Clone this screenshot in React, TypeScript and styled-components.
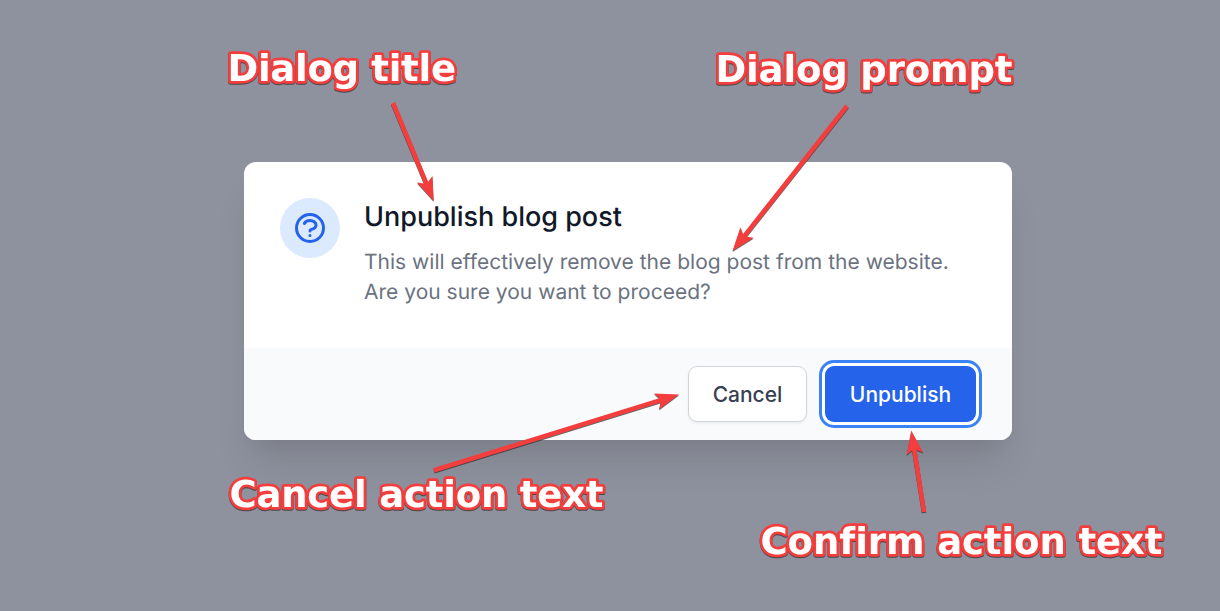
import React from "react";
import styled, { createGlobalStyle } from "styled-components";

const GlobalStyle = createGlobalStyle`
  *, *::before, *::after { box-sizing: border-box; }
  body { margin: 0; background: #8e929e; }
`;

const Backdrop = styled.main`
  position: relative;
  width: 1220px;
  height: 611px;
  padding: 162px 208px 0 244px;
  overflow: hidden;
  background: #8e929e;
  font-family: Inter, "Liberation Sans", sans-serif;
  text-rendering: geometricPrecision;
`;

const Dialog = styled.section`
  width: 768px;
  height: 278px;
  display: flex;
  flex-direction: column;
  overflow: hidden;
  border-radius: 12px;
  background: #fff;
  box-shadow: 0 30px 38px -8px rgba(0, 0, 0, 0.1), 0 15px 15px -8px rgba(0, 0, 0, 0.04);
`;

const Content = styled.div`
  flex: 1;
  display: flex;
  gap: 24px;
  padding: 36px 36px 0;
`;

const IconDisc = styled.div`
  width: 60px;
  height: 60px;
  flex: none;
  display: grid;
  place-items: center;
  border-radius: 50%;
  background: #dbeafe;
  color: #2563eb;
`;

const Copy = styled.div`
  flex: 1;
  white-space: nowrap;
`;

const Title = styled.h3`
  margin: 0 0 13px;
  color: #111827;
  font-size: 27px;
  font-weight: 500;
  line-height: 37px;
`;

const Prompt = styled.p`
  margin: 0;
  color: #6b7280;
  font-size: 21px;
  line-height: 30px;
  letter-spacing: 0.01px;
`;

const Footer = styled.footer`
  height: 92px;
  display: flex;
  justify-content: flex-end;
  align-items: center;
  gap: 18px;
  padding: 0 36px;
  background: #f9fafb;
`;

const Button = styled.button<{ $primary?: boolean }>`
  width: ${(p) => (p.$primary ? 151 : 119)}px;
  height: 56px;
  padding: 2px 0 0;
  border: ${(p) => (p.$primary ? "0" : "1px solid #d1d5db")};
  border-radius: 9px;
  background: ${(p) => (p.$primary ? "#2563eb" : "#fff")};
  color: ${(p) => (p.$primary ? "#fff" : "#374151")};
  font: 500 21px/30px Inter, "Liberation Sans", sans-serif;
  box-shadow: ${(p) =>
    p.$primary ? "0 0 0 3px #fff, 0 0 0 6px #3b82f6" : "0 1.5px 3px rgba(0, 0, 0, 0.05)"};
`;

const Annotations = styled.svg`
  position: absolute;
  inset: 0;
  pointer-events: none;
  filter: drop-shadow(0.5px 1px 0.5px rgba(40, 40, 40, 0.7));
`;

const Label = styled.text`
  fill: #fff;
  stroke: #f43d3d;
  stroke-width: 5.4px;
  stroke-linejoin: round;
  paint-order: stroke;
  font: bold 37px "DejaVu Sans", sans-serif;
  font-variant-ligatures: none;
`;

type ArrowProps = { from: [number, number]; to: [number, number] };

function Arrow({ from, to }: ArrowProps) {
  const dx = to[0] - from[0];
  const dy = to[1] - from[1];
  const length = Math.hypot(dx, dy);
  const angle = (Math.atan2(dy, dx) * 180) / Math.PI;
  return (
    <path
      fill="#f43d3d"
      transform={`translate(${to[0]} ${to[1]}) rotate(${angle})`}
      d={`M0 0L-23.5-8.4L-20-2.3H${-length}V2.3H-20L-23.5 8.4Z`}
    />
  );
}

const labels = [
  { text: "Dialog title", x: 227.5, y: 81, width: 228.5 },
  { text: "Dialog prompt", x: 715.5, y: 82, width: 297 },
  { text: "Cancel action text", x: 229.5, y: 507, width: 374 },
  { text: "Confirm action text", x: 760.5, y: 554, width: 402 },
];

const arrows: ArrowProps[] = [
  { from: [393, 103], to: [433.7, 201] },
  { from: [847, 106], to: [732.5, 251] },
  { from: [434, 470.3], to: [679, 394.5] },
  { from: [924, 512], to: [911.3, 430.5] },
];

export default function App() {
  return (
    <>
      <GlobalStyle />
      <Backdrop>
        <Dialog role="dialog" aria-labelledby="dialog-title">
          <Content>
            <IconDisc>
              <svg width="36" height="36" viewBox="0 0 24 24" fill="none" stroke="currentColor" strokeWidth="2" strokeLinecap="round" strokeLinejoin="round">
                <path d="M8.228 9c.549-1.165 2.03-2 3.772-2 2.21 0 4 1.343 4 3 0 1.4-1.278 2.575-3.006 2.907-.542.104-.994.54-.994 1.093m0 3h.01M21 12a9 9 0 11-18 0 9 9 0 0118 0z" />
              </svg>
            </IconDisc>
            <Copy>
              <Title id="dialog-title">Unpublish blog post</Title>
              <Prompt>
                This will effectively remove the blog post from the website.
                <br />
                Are you sure you want to proceed?
              </Prompt>
            </Copy>
          </Content>
          <Footer>
            <Button>Cancel</Button>
            <Button $primary>Unpublish</Button>
          </Footer>
        </Dialog>
        <Annotations width="1220" height="611" viewBox="0 0 1220 611">
          {arrows.map((a, i) => (
            <Arrow key={i} {...a} />
          ))}
          {labels.map((l) => (
            <Label key={l.text} x={l.x} y={l.y} textLength={l.width}>
              {l.text}
            </Label>
          ))}
        </Annotations>
      </Backdrop>
    </>
  );
}
